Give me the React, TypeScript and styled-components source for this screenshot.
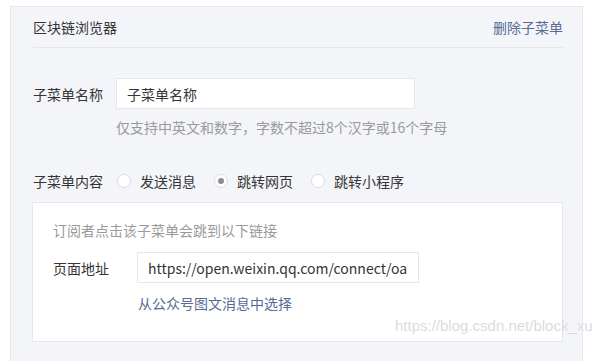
import React from 'react';
import styled, { createGlobalStyle } from 'styled-components';

const GlobalStyle = createGlobalStyle`
  html, body {
    margin: 0;
    padding: 0;
    background: #ffffff;
    overflow: hidden;
  }
  body {
    font-family: "Noto Sans CJK SC", "Noto Sans", sans-serif;
    font-size: 14px;
    color: #353535;
  }
`;

const Panel = styled.div`
  position: relative;
  margin: 6px 0 0 10px;
  width: 573px;
  min-height: 420px;
  box-sizing: border-box;
  padding: 0 19px 0 22px;
  background: #f4f5f9;
  border: 1px solid #e7e7eb;
`;

const Header = styled.div`
  display: flex;
  justify-content: space-between;
  align-items: center;
  height: 40px;
  border-bottom: 1px solid #e7e7eb;
`;

const Title = styled.span`
  color: #353535;
`;

const LinkText = styled.a<{ $indent?: number }>`
  color: #576b95;
  text-decoration: none;
  cursor: pointer;
  margin-left: ${(p) => p.$indent || 0}px;
`;

const FormRow = styled.div<{ $top: number }>`
  display: flex;
  align-items: center;
  margin-top: ${(p) => p.$top}px;
  line-height: 20px;
`;

const Label = styled.span<{ $width: number }>`
  width: ${(p) => p.$width}px;
  flex-shrink: 0;
  color: #353535;
`;

const TextInput = styled.input<{ $width: number }>`
  width: ${(p) => p.$width}px;
  height: 31px;
  box-sizing: border-box;
  padding: 0 10px;
  border: 1px solid #e7e7eb;
  background: #ffffff;
  font-family: "Noto Sans CJK SC", "Noto Sans", sans-serif;
  font-size: 14px;
  color: #353535;
  outline: none;
`;

const Hint = styled.div<{ $top: number; $indent: number }>`
  margin-top: ${(p) => p.$top}px;
  margin-left: ${(p) => p.$indent}px;
  line-height: 20px;
  color: #9a9a9a;
`;

const RadioOption = styled.label`
  display: flex;
  align-items: center;
  margin-right: 18px;
  cursor: pointer;
`;

const RadioCircle = styled.span<{ $checked?: boolean }>`
  position: relative;
  width: 14px;
  height: 14px;
  box-sizing: border-box;
  border-radius: 50%;
  border: 1px solid #dcdcdf;
  background: #ffffff;
  margin-right: 9px;

  &::after {
    content: '';
    display: ${(p) => (p.$checked ? 'block' : 'none')};
    position: absolute;
    left: 3px;
    top: 3px;
    width: 6px;
    height: 6px;
    border-radius: 50%;
    background: #8d8d8d;
  }
`;

const LinkBox = styled.div`
  margin: 11px 0 0 -1px;
  padding: 17px 20px 28px;
  background: #ffffff;
  border: 1px solid #e7e7eb;
  line-height: 20px;
`;

const Watermark = styled.div`
  position: absolute;
  left: 395px;
  top: 317px;
  font-family: "Liberation Sans", Arial, sans-serif;
  font-size: 15px;
  color: rgba(210, 210, 215, 0.8);
  text-shadow: 0 0 1px #ffffff;
  white-space: nowrap;
  pointer-events: none;
`;

const options = [
  { text: '发送消息', checked: false },
  { text: '跳转网页', checked: true },
  { text: '跳转小程序', checked: false },
];

export default function App() {
  return (
    <>
      <GlobalStyle />
      <Panel>
        <Header>
          <Title>区块链浏览器</Title>
          <LinkText>删除子菜单</LinkText>
        </Header>

        <FormRow $top={30}>
          <Label $width={83}>子菜单名称</Label>
          <TextInput $width={299} defaultValue="子菜单名称" />
        </FormRow>
        <Hint $top={8} $indent={83}>仅支持中英文和数字，字数不超过8个汉字或16个字母</Hint>

        <FormRow $top={34}>
          <Label $width={84}>子菜单内容</Label>
          {options.map((item) => (
            <RadioOption key={item.text}>
              <RadioCircle $checked={item.checked} />
              {item.text}
            </RadioOption>
          ))}
        </FormRow>

        <LinkBox>
          <Hint $top={0} $indent={0}>订阅者点击该子菜单会跳到以下链接</Hint>
          <FormRow $top={12}>
            <Label $width={84}>页面地址</Label>
            <TextInput $width={282} defaultValue="https://open.weixin.qq.com/connect/oauth2/authorize" />
          </FormRow>
          <FormRow $top={10}>
            <LinkText $indent={85}>从公众号图文消息中选择</LinkText>
          </FormRow>
        </LinkBox>
      </Panel>
      <Watermark>https://blog.csdn.net/block_xu</Watermark>
    </>
  );
}
